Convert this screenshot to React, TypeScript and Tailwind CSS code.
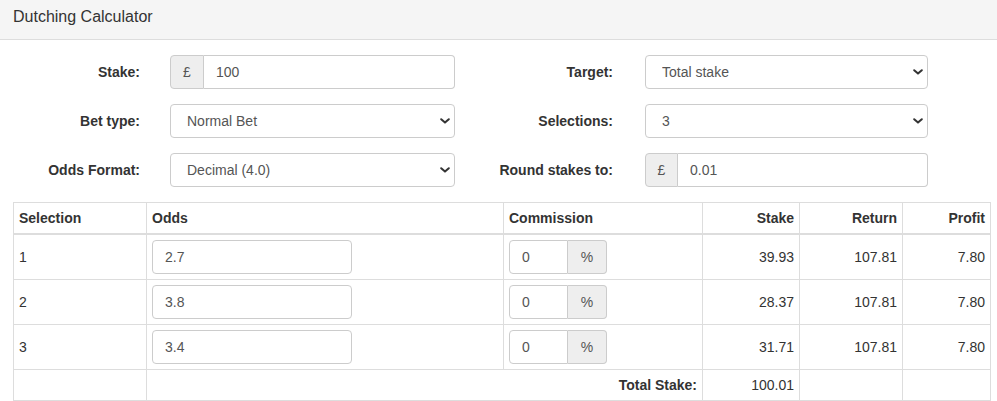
import React from "react";

const font = { fontFamily: '"Liberation Sans", Arial, Helvetica, sans-serif' };

function Chevron() {
  return (
    <svg
      className="pointer-events-none absolute right-[5px] top-1/2 -translate-y-1/2"
      width="10"
      height="6"
      viewBox="0 0 10 6"
      fill="none"
    >
      <path d="M1.2 1.2 L5 4.6 L8.8 1.2" stroke="#333" strokeWidth="2" strokeLinecap="round" strokeLinejoin="round" />
    </svg>
  );
}

function Select({ value, width }: { value: string; width: string }) {
  return (
    <div className={`relative h-[34px] ${width}`}>
      <select
        defaultValue={value}
        className="h-full w-full appearance-none rounded-[4px] border border-[#ccc] bg-white pl-[16px] pr-[24px] text-[14px] text-[#555] outline-none"
        style={font}
      >
        <option>{value}</option>
      </select>
      <Chevron />
    </div>
  );
}

function PoundInput({ value, width, addonW }: { value: string; width: string; addonW: string }) {
  return (
    <div className={`flex h-[34px] ${width}`}>
      <span
        className={`flex ${addonW} items-center justify-center rounded-l-[4px] border border-[#ccc] bg-[#eee] text-[14px] text-[#555]`}
      >
        £
      </span>
      <input
        defaultValue={value}
        className="min-w-0 flex-1 rounded-r-[4px] border border-l-0 border-[#ccc] bg-white px-[12px] text-[14px] text-[#555] outline-none"
        style={font}
      />
    </div>
  );
}

function Label({ text, width }: { text: string; width: string }) {
  return <div className={`${width} shrink-0 text-right text-[14px] font-bold text-[#333]`}>{text}</div>;
}

const rows = [
  { n: "1", odds: "2.7", stake: "39.93" },
  { n: "2", odds: "3.8", stake: "28.37" },
  { n: "3", odds: "3.4", stake: "31.71" },
];

export default function App() {
  return (
    <div className="h-[401px] w-[997px] overflow-hidden bg-white text-[14px] leading-[20px] text-[#333]" style={font}>
      {/* panel heading */}
      <div className="h-[40px] border-b border-[#ddd] bg-[#f5f5f5] px-[13px] pt-[7px]">
        <h3 className="text-[16px] leading-[20px] font-normal text-[#333]">Dutching Calculator</h3>
      </div>

      {/* panel body */}
      <div className="pt-[15px]">
        <div className="flex flex-col gap-[15px]">
          <div className="flex items-center">
            <Label text="Stake:" width="w-[140px]" />
            <div className="ml-[30px]">
              <PoundInput value="100" width="w-[285px]" addonW="w-[34px]" />
            </div>
            <Label text="Target:" width="w-[158px]" />
            <div className="ml-[32px]">
              <Select value="Total stake" width="w-[283px]" />
            </div>
          </div>
          <div className="flex items-center">
            <Label text="Bet type:" width="w-[140px]" />
            <div className="ml-[30px]">
              <Select value="Normal Bet" width="w-[285px]" />
            </div>
            <Label text="Selections:" width="w-[158px]" />
            <div className="ml-[32px]">
              <Select value="3" width="w-[283px]" />
            </div>
          </div>
          <div className="flex items-center">
            <Label text="Odds Format:" width="w-[140px]" />
            <div className="ml-[30px]">
              <Select value="Decimal (4.0)" width="w-[285px]" />
            </div>
            <Label text="Round stakes to:" width="w-[158px]" />
            <div className="ml-[32px]">
              <PoundInput value="0.01" width="w-[283px]" addonW="w-[33px]" />
            </div>
          </div>
        </div>

        {/* selections table */}
        <table className="ml-[13px] mt-[15px] w-[977px] table-fixed border-collapse border border-[#ddd]">
          <colgroup>
            <col className="w-[133px]" />
            <col className="w-[357px]" />
            <col className="w-[199px]" />
            <col className="w-[97px]" />
            <col className="w-[103px]" />
            <col className="w-[88px]" />
          </colgroup>
          <thead>
            <tr className="border-b-2 border-[#ddd]">
              <th className="border border-b-2 border-[#ddd] p-[5px] text-left align-bottom font-bold">Selection</th>
              <th className="border border-b-2 border-[#ddd] p-[5px] text-left align-bottom font-bold">Odds</th>
              <th className="border border-b-2 border-[#ddd] p-[5px] text-left align-bottom font-bold">Commission</th>
              <th className="border border-b-2 border-[#ddd] p-[5px] text-right align-bottom font-bold">Stake</th>
              <th className="border border-b-2 border-[#ddd] p-[5px] text-right align-bottom font-bold">Return</th>
              <th className="border border-b-2 border-[#ddd] p-[5px] text-right align-bottom font-bold">Profit</th>
            </tr>
          </thead>
          <tbody>
            {rows.map((r) => (
              <tr key={r.n}>
                <td className="border border-[#ddd] p-[5px] align-middle">{r.n}</td>
                <td className="border border-[#ddd] p-[5px] align-middle">
                  <input
                    defaultValue={r.odds}
                    className="block h-[34px] w-[200px] rounded-[4px] border border-[#ccc] bg-white px-[12px] text-[14px] text-[#555] outline-none"
                    style={font}
                  />
                </td>
                <td className="border border-[#ddd] p-[5px] align-middle">
                  <div className="flex h-[34px] w-[98px]">
                    <input
                      defaultValue="0"
                      className="w-[59px] rounded-l-[4px] border border-[#ccc] bg-white px-[12px] text-[14px] text-[#555] outline-none"
                      style={font}
                    />
                    <span className="flex flex-1 items-center justify-center rounded-r-[4px] border border-l-0 border-[#ccc] bg-[#eee] text-[14px] text-[#555]">
                      %
                    </span>
                  </div>
                </td>
                <td className="border border-[#ddd] p-[5px] text-right align-middle">{r.stake}</td>
                <td className="border border-[#ddd] p-[5px] text-right align-middle">107.81</td>
                <td className="border border-[#ddd] p-[5px] text-right align-middle">7.80</td>
              </tr>
            ))}
            <tr>
              <td className="border border-[#ddd] p-[5px]"></td>
              <td colSpan={2} className="border border-[#ddd] p-[5px] text-right font-bold">
                Total Stake:
              </td>
              <td className="border border-[#ddd] p-[5px] text-right">100.01</td>
              <td className="border border-[#ddd] p-[5px]"></td>
              <td className="border border-[#ddd] p-[5px]"></td>
            </tr>
          </tbody>
        </table>
      </div>
    </div>
  );
}
